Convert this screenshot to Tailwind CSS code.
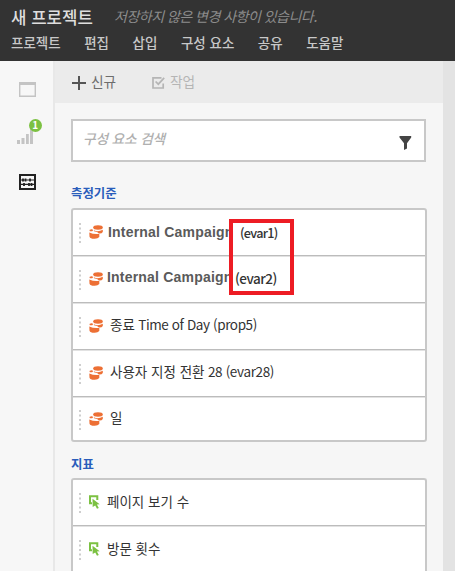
<!DOCTYPE html>
<html lang="ko">
<head>
<meta charset="utf-8">
<title>새 프로젝트</title>
<script src="https://cdn.jsdelivr.net/npm/@tailwindcss/browser@4"></script>
</head>
<body class="relative flex h-[571px] w-[455px] flex-col overflow-hidden bg-[#f6f6f6] font-['Noto_Sans_CJK_KR',sans-serif] whitespace-nowrap text-[#333]">
<svg class="hidden">
  <symbol id="dim" viewBox="0 0 14 14">
    <ellipse cx="9" cy="2.5" rx="4.8" ry="2.2"/>
    <path d="M4.8 5.3Q9 7.4 13.8 4.8V7Q12.7 8.8 9.8 8.5Q8.7 6.7 5 6.3Z"/>
    <path d="M.7 4.8Q2 3.9 3.4 4.2L4 5.7Q2.1 6.8.5 5.9Z"/>
    <path d="M.3 7.5Q5 9.7 10.3 8.9V12Q8.8 14 5.1 13.8Q1.3 13.8.5 11.8Z"/>
  </symbol>
  <symbol id="metric" viewBox="0 0 11 14">
    <path d="M3 8.2H1V1.2H8.3V5" fill="none" stroke="#7cc142" stroke-width="2"/>
    <path d="M3.5 3.8L10.7 9.2L7.9 9.6L9.8 13L8 13.8L6.2 10.5L3.7 12Z"/>
  </symbol>
  <symbol id="grip" viewBox="0 0 2 20">
    <path d="M0 0h2v2H0zM0 4.5h2v2H0zM0 9h2v2H0zM0 13.5h2v2H0zM0 18h2v2H0z"/>
  </symbol>
</svg>

<header class="h-[61px] shrink-0 bg-[#333] pl-[11px]">
  <div class="flex h-[33px] items-center">
    <h1 class="w-[103px] text-[16.8px] leading-5 font-medium text-[#dedede]">새 프로젝트</h1>
    <p class="-mt-[2px] text-[14.1px] leading-5 tracking-[-0.58px] text-[#8c8c8c] italic">저장하지 않은 변경 사항이 있습니다.</p>
  </div>
  <nav class="flex h-[18px] items-center gap-[23.5px] text-[13.5px] leading-5 font-medium text-[#c8c8c8]">
    <span>프로젝트</span><span>편집</span><span>삽입</span><span>구성 요소</span><span>공유</span><span>도움말</span>
  </nav>
</header>

<div class="flex min-h-0 grow">
  <aside class="flex w-[55px] shrink-0 flex-col items-start border-r-2 border-[#e8e8e8] bg-[#f7f7f7] pl-[17px]">
    <svg class="mt-[21px] ml-[2px] h-[15px] w-[17px]" viewBox="0 0 17 15"><path d="M.7.7H16.3V14.3H.7Z" fill="none" stroke="#c4c4c4" stroke-width="1.4"/><path d="M0 0H17V3H0Z" fill="#c4c4c4"/></svg>
    <div class="relative mt-[31px] h-[16px] w-[16px]">
      <svg class="h-4 w-4" viewBox="0 0 16 16" fill="#c4c4c4"><path d="M0 12h3v4H0zM4.5 10h3v6h-3zM9 6h2.8v10H9zM13 0h3v16h-3z"/></svg>
      <span class="absolute -top-[9px] left-[12px] flex h-[12.5px] w-[12.5px] items-center justify-center rounded-full bg-[#7cc142] pb-px text-[10px] leading-3 font-bold text-white">1</span>
    </div>
    <svg class="mt-[30px] ml-[2px] h-[16px] w-[17px]" viewBox="0 0 17 16" fill="none" stroke="#222"><path d="M1 1H16V15H1Z" stroke-width="2"/><path d="M1 6H16M1 10.3H16" stroke-width="1.2"/><path d="M4 4.5v3M6.5 4.5v3M11 4.5v3M5 9v3M10 9v3M12.5 9v3" stroke-width="1.8"/></svg>
  </aside>

  <main class="flex min-w-0 grow flex-col">
    <div class="flex h-[42px] shrink-0 items-center bg-[#ebebeb] pl-[17px] text-[13.7px] leading-5">
      <svg class="mt-[2px] mr-[5px] h-[14px] w-[14px]" viewBox="0 0 14 14"><path d="M7 0V14M0 7H14" stroke="#555" stroke-width="2"/></svg>
      <span class="-mt-[2px] w-[61px] text-[#6d6d6d]">신규</span>
      <svg class="mt-[1px] mr-[5px] h-[13px] w-[13px]" viewBox="0 0 13 13" fill="none" stroke="#b5b5b5" stroke-width="1.7"><path d="M9.5 1.8H1V12H11.2V7.5M3.6 5.5L6.3 8.2L12.2 1.8"/></svg>
      <span class="-mt-[2px] text-[#b5b5b5]">작업</span>
    </div>

    <div class="flex grow flex-col pr-4 pl-4">
      <div class="mt-4 mr-px flex h-[43px] shrink-0 items-center justify-between border-2 border-[#c8c8c8] bg-white pr-[12px] pl-[10px]">
        <span class="-mt-[5px] text-[13.7px] leading-5 font-medium tracking-[-0.15px] text-[#b0b0b0] italic">구성 요소 검색</span>
        <svg class="mt-[4px] h-[14px] w-[13px]" viewBox="0 0 13 14" fill="#444"><path d="M.5 0H12.2V1.5L8 7.3V12.5L5 14V7.3L.5 1.5Z"/></svg>
      </div>

      <h2 class="mt-[21px] h-[25px] shrink-0 text-[12.4px] leading-5 font-bold text-[#2a5dbb]">측정기준</h2>
      <section class="h-[234px] shrink-0 divide-y divide-[#bcbcbc] rounded-[3px] border-2 border-[#c8c8c8] bg-white text-[13.5px] leading-5">
        <div class="flex h-[46px] items-center pl-[6px]"><svg class="mt-[1px] h-5 w-[2px] fill-[#cecece]"><use href="#grip"/></svg><svg class="-mt-px ml-2 h-[14px] w-[14px] fill-[#ed7035]"><use href="#dim"/></svg><span class="-mt-px ml-[5px] w-[132px] font-['Liberation_Sans',sans-serif] text-[14px] font-bold tracking-[0.2px] text-[#5a5a5a]">Internal Campaign</span><span class="text-[12.7px] font-medium tracking-[-0.7px]">(evar1)</span></div>
        <div class="flex h-[47px] items-center pl-[6px] shadow-[inset_0_1px_#e2e2e2]"><svg class="mt-[1px] h-5 w-[2px] fill-[#cecece]"><use href="#grip"/></svg><svg class="-mt-px ml-2 h-[14px] w-[14px] fill-[#ed7035]"><use href="#dim"/></svg><span class="-mt-[5px] ml-[4px] w-[128px] font-['Liberation_Sans',sans-serif] text-[14px] font-bold tracking-[0.2px] text-[#5a5a5a]">Internal Campaign</span><span class="-mt-[2px] font-medium tracking-[-0.5px]">(evar2)</span></div>
        <div class="flex h-[47px] items-center pl-[6px] shadow-[inset_0_1px_#e2e2e2]"><svg class="mt-[1px] h-5 w-[2px] fill-[#cecece]"><use href="#grip"/></svg><svg class="-mt-px ml-2 h-[14px] w-[14px] fill-[#ed7035]"><use href="#dim"/></svg><span class="-mt-[5px] ml-[7px]">종료<span class="tracking-[-0.4px]"> Time of Day (prop5)</span></span></div>
        <div class="flex h-[47px] items-center pl-[6px] shadow-[inset_0_1px_#e2e2e2]"><svg class="mt-[1px] h-5 w-[2px] fill-[#cecece]"><use href="#grip"/></svg><svg class="-mt-px ml-2 h-[14px] w-[14px] fill-[#ed7035]"><use href="#dim"/></svg><span class="-mt-[5px] ml-[7px]">사용자 지정 전환<span class="tracking-[-0.35px]"> 28 (evar28)</span></span></div>
        <div class="flex h-[43px] items-center pl-[6px] shadow-[inset_0_1px_#e2e2e2]"><svg class="mt-[3px] h-5 w-[2px] fill-[#cecece]"><use href="#grip"/></svg><svg class="mt-px ml-2 h-[14px] w-[14px] fill-[#ed7035]"><use href="#dim"/></svg><span class="-mt-[3px] ml-[7px]">일</span></div>
      </section>

      <h2 class="mt-[12px] h-[24px] shrink-0 text-[12.4px] leading-5 font-bold text-[#2a5dbb]">지표</h2>
      <section class="h-[96px] shrink-0 divide-y divide-[#bcbcbc] rounded-t-[3px] border-2 border-b-0 border-[#c8c8c8] bg-white text-[13.5px] leading-5">
        <div class="flex h-[46px] items-center pl-[6px]"><svg class="mt-[1px] h-5 w-[2px] fill-[#cecece]"><use href="#grip"/></svg><svg class="-mt-px ml-2 h-[14px] w-[11px] fill-[#7cc142]"><use href="#metric"/></svg><span class="-mt-[4px] ml-[7px]">페이지 보기 수</span></div>
        <div class="flex h-[47px] items-center pl-[6px] shadow-[inset_0_1px_#e2e2e2]"><svg class="mt-[1px] h-5 w-[2px] fill-[#cecece]"><use href="#grip"/></svg><svg class="-mt-px ml-2 h-[14px] w-[11px] fill-[#7cc142]"><use href="#metric"/></svg><span class="-mt-[4px] ml-[7px]">방문 횟수</span></div>
      </section>
    </div>
  </main>
  <div class="w-[12px] shrink-0 bg-[#e3e3e3]"></div>
</div>

<div class="absolute top-[219px] left-[229px] h-[76px] w-[65px] border-4 border-[#ed1c24]"></div>
</body>
</html>
